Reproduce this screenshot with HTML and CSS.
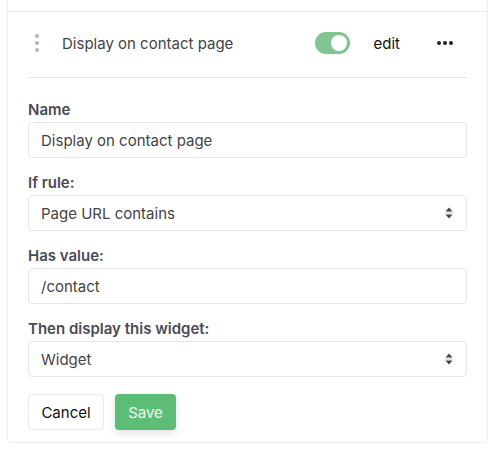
FILE: index.html
```html
<!DOCTYPE html>
<html>
<head>
<meta charset="utf-8">
<link rel="stylesheet" href="styles.css">
</head>
<body>
<div class="list">
  <div class="prev"></div>
  <div class="item">
    <div class="inner">
      <div class="head">
        <span class="drag"><i></i><i></i><i></i></span>
        <span class="title">Display on contact page</span>
        <span class="toggle"><span class="knob"></span></span>
        <span class="edit">edit</span>
        <span class="more"><i></i><i></i><i></i></span>
      </div>
      <div class="form">
        <div class="field">
          <div class="label">Name</div>
          <div class="input">Display on contact page</div>
        </div>
        <div class="field">
          <div class="label">If rule:</div>
          <div class="input select">Page URL contains
            <svg class="arrows" width="8" height="12" viewBox="0 0 8 12"><path d="M4 0.5 L7.5 4.5 H0.5 Z M4 11.5 L7.5 7.5 H0.5 Z" fill="#444"/><rect x="0.5" y="5.6" width="7" height="0.8" fill="#bbb"/></svg>
          </div>
        </div>
        <div class="field">
          <div class="label">Has value:</div>
          <div class="input">/contact</div>
        </div>
        <div class="field">
          <div class="label">Then display this widget:</div>
          <div class="input select">Widget
            <svg class="arrows" width="8" height="12" viewBox="0 0 8 12"><path d="M4 0.5 L7.5 4.5 H0.5 Z M4 11.5 L7.5 7.5 H0.5 Z" fill="#444"/><rect x="0.5" y="5.6" width="7" height="0.8" fill="#bbb"/></svg>
          </div>
        </div>
        <div class="actions">
          <span class="btn cancel">Cancel</span>
          <span class="btn save">Save</span>
        </div>
      </div>
    </div>
  </div>
</div>
</body>
</html>
```
FILE: styles.css
```css
* { box-sizing: border-box; }
html, body { margin: 0; padding: 0; background: #fff; }
body {
  font-family: Inter, "Liberation Sans", sans-serif;
  color: #444;
  padding: 0 10px 0 7px;
}
.list {
  border-left: 1px solid #efefef;
  border-right: 1px solid #efefef;
  border-bottom: 1px solid #efefef;
  border-radius: 0 0 5px 5px;
}
.prev { height: 11px; }
.item { border-top: 1px solid #ececec; }
.inner { padding: 0 20px 12px 20px; }
.head {
  display: flex;
  align-items: center;
  height: 66px;
  padding-bottom: 3px;
  border-bottom: 1px solid #e4e4e4;
}
.drag {
  display: flex;
  flex-direction: column;
  gap: 3px;
  margin-left: 7px;
  width: 4px;
}
.drag i {
  display: block;
  width: 4px;
  height: 4px;
  border-radius: 50%;
  background: #b5b5b5;
}
.title {
  margin-left: 23px;
  font-size: 15px;
  color: #454545;
  flex: 1;
}
.toggle {
  width: 35px;
  height: 22px;
  border-radius: 11px;
  background: #81c392;
  display: flex;
  align-items: center;
  justify-content: flex-end;
  padding-right: 3px;
}
.knob {
  width: 16px;
  height: 16px;
  border-radius: 50%;
  background: #fff;
}
.edit {
  margin-left: 24px;
  font-size: 15px;
  color: #111;
}
.more {
  display: flex;
  gap: 2px;
  margin-left: 37px;
  margin-right: 14px;
}
.more i {
  display: block;
  width: 4px;
  height: 4px;
  border-radius: 50%;
  background: #222;
}
.form {
  padding-top: 22px;
  display: flex;
  flex-direction: column;
  gap: 15px;
}
.label {
  font-size: 15px;
  line-height: 20px;
  font-weight: 600;
  color: #4a4b55;
  margin-bottom: 2px;
}
.input {
  height: 36px;
  border: 1px solid #e6e6e6;
  border-radius: 4px;
  padding: 0 12px;
  display: flex;
  align-items: center;
  font-size: 15px;
  color: #444;
}
.select { justify-content: space-between; }
.arrows { margin-right: 1px; }
.actions {
  display: flex;
  gap: 11px;
  margin-top: 2px;
}
.btn {
  height: 36px;
  display: flex;
  align-items: center;
  justify-content: center;
  border-radius: 4px;
  font-size: 15px;
}
.cancel {
  width: 76px;
  border: 1px solid #eaeaea;
  color: #111;
  background: #fff;
}
.save {
  width: 61px;
  background: #5dbd77;
  color: #eef8f0;
  box-shadow: 0 3px 8px rgba(0,0,0,0.12);
}
```
